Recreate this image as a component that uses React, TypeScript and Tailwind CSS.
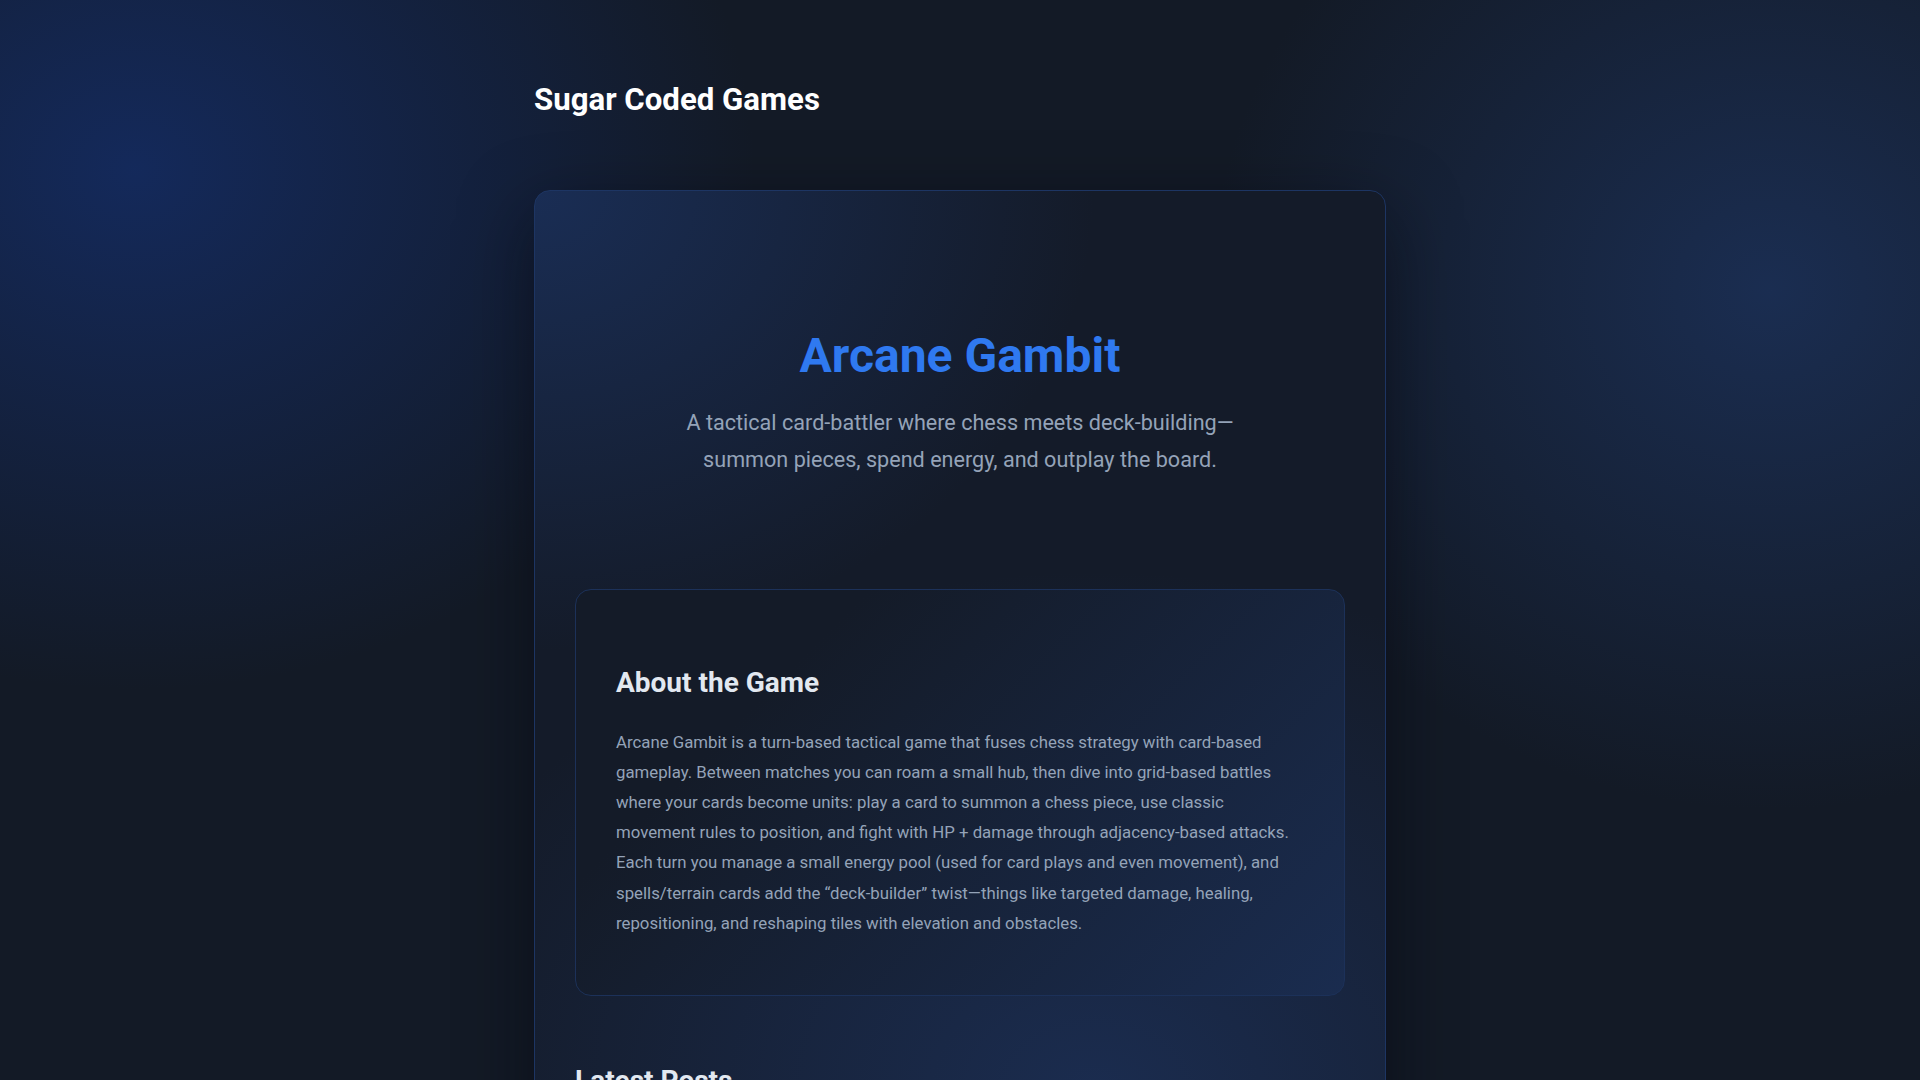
import React from "react";

const posts = [
  { title: "Devlog #4: Terrain Cards and Elevation", date: "March 2025" },
  { title: "Devlog #3: Energy, Movement and Tempo", date: "February 2025" },
];

export default function App() {
  return (
    <div className="min-h-screen w-full bg-[#131a26] bg-[radial-gradient(ellipse_620px_520px_at_135px_170px,rgba(20,44,100,0.85),transparent),radial-gradient(ellipse_560px_520px_at_1770px_290px,rgba(28,50,92,0.8),transparent)] font-['Roboto','Noto_Sans',sans-serif] antialiased">
      <div className="mx-auto w-[852px] pt-[82px] pb-20">
        <header className="mb-[72px]">
          <h1 className="text-[31.2px] font-bold leading-9 text-white">Sugar Coded Games</h1>
        </header>

        <main className="rounded-2xl border border-[#1d3563] bg-[#141b29] bg-[radial-gradient(ellipse_560px_460px_at_0px_0px,rgba(30,60,120,0.55),transparent),radial-gradient(ellipse_700px_520px_at_560px_900px,rgba(32,58,110,0.55),transparent)] px-10 pb-16 shadow-[0_24px_70px_rgba(5,8,15,0.55)]">
          <section className="pt-[141px] text-center">
            <h2 className="text-5xl font-bold leading-none text-[#2f79f0]">Arcane Gambit</h2>
            <p className="mx-auto mt-6 max-w-[600px] text-[21.6px] leading-[37px] text-[#94a3b8]">
              A tactical card-battler where chess meets deck-building—summon pieces, spend energy, and outplay the board.
            </p>
          </section>

          <section className="mt-[111px] rounded-2xl border border-[#1c3159] bg-[#141c2a] bg-[linear-gradient(135deg,#141b28_25%,#1a2c4f_100%)] px-10 pt-[76px] pb-[57px]">
            <h3 className="text-[28px] font-bold leading-[1.2] text-[#e2e8f0]">About the Game</h3>
            <p className="mt-[27px] text-[16.8px] leading-[30.2px] text-[#94a3b8]">
              Arcane Gambit is a turn-based tactical game that fuses chess strategy with card-based gameplay. Between matches you can roam a small hub, then dive into grid-based battles where your cards become units: play a card to summon a chess piece, use classic movement rules to position, and fight with HP + damage through adjacency-based attacks. Each turn you manage a small energy pool (used for card plays and even movement), and spells/terrain cards add the “deck-builder” twist—things like targeted damage, healing, repositioning, and reshaping tiles with elevation and obstacles.
            </p>
          </section>

          <section className="mt-[68px]">
            <h3 className="text-[28px] font-bold leading-[1.2] text-[#e2e8f0]">Latest Posts</h3>
            <div className="mt-6 flex flex-col gap-4">
              {posts.map((p) => (
                <article key={p.title} className="rounded-xl border border-[#1c3159] bg-[#151e2e] px-6 py-5">
                  <div className="text-lg font-semibold text-[#e2e8f0]">{p.title}</div>
                  <div className="mt-1 text-sm text-[#94a3b8]">{p.date}</div>
                </article>
              ))}
            </div>
          </section>
        </main>
      </div>
    </div>
  );
}
